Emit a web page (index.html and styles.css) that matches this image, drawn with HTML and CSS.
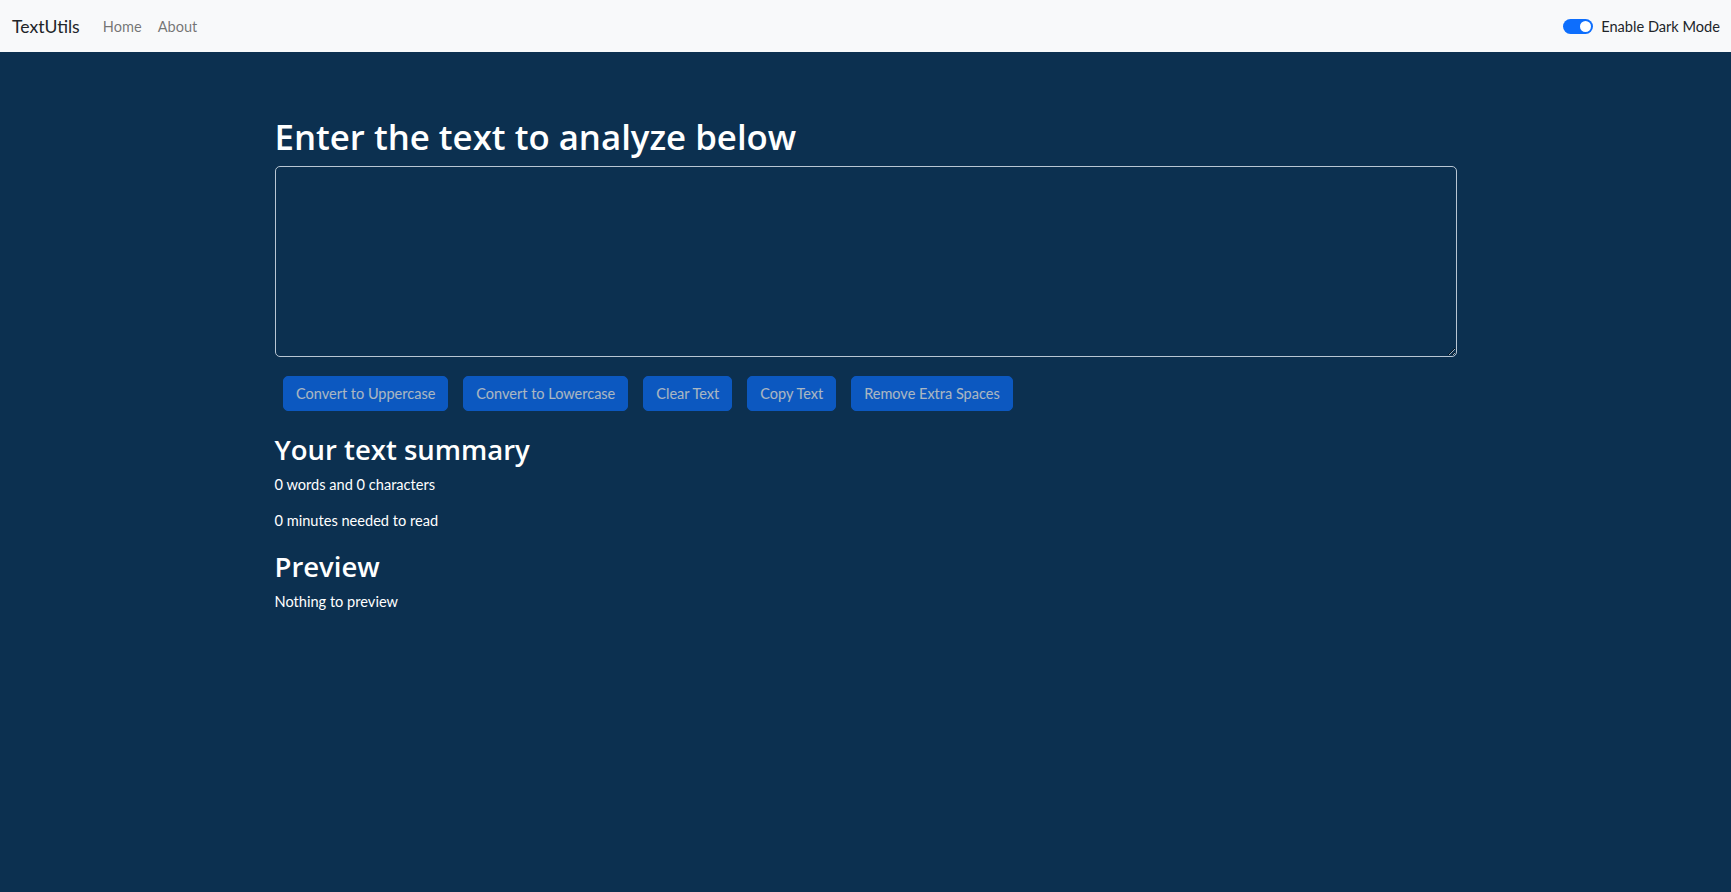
FILE: index.html
```html
<!DOCTYPE html>
<html lang="en">
<head>
<meta charset="utf-8">
<title>TextUtils</title>
<link rel="stylesheet" href="styles.css">
</head>
<body>
<nav class="navbar">
  <a class="brand" href="#">TextUtils</a>
  <ul class="nav-links">
    <li><a href="#">Home</a></li>
    <li><a href="#">About</a></li>
  </ul>
  <label class="switch">
    <span class="switch-track"><span class="switch-knob"></span></span>
    <span class="switch-label">Enable Dark Mode</span>
  </label>
</nav>
<main class="container">
  <h1 class="title">Enter the text to analyze below</h1>
  <textarea class="text-input" rows="8"></textarea>
  <div class="actions">
    <button class="btn" disabled>Convert to Uppercase</button>
    <button class="btn" disabled>Convert to Lowercase</button>
    <button class="btn" disabled>Clear Text</button>
    <button class="btn" disabled>Copy Text</button>
    <button class="btn" disabled>Remove Extra Spaces</button>
  </div>
  <section class="summary">
    <h2 class="subtitle">Your text summary</h2>
    <p class="line">0 words and 0 characters</p>
    <p class="line">0 minutes needed to read</p>
    <h2 class="subtitle">Preview</h2>
    <p class="line">Nothing to preview</p>
  </section>
</main>
</body>
</html>
```
FILE: styles.css
```css
* { box-sizing: border-box; }
html, body { height: 100%; }
body {
  margin: 0;
  background: #0c3050;
  color: #ffffff;
  font-family: Lato, "Noto Sans", sans-serif;
  font-size: 14.6px;
}
.navbar {
  height: 52px;
  background: #f8f9fa;
  display: flex;
  align-items: center;
  padding: 0 11px 0 12px;
}
.brand {
  color: #212529;
  text-decoration: none;
  font-size: 17.6px;
  margin-right: 23px;
}
.nav-links {
  list-style: none;
  display: flex;
  gap: 16px;
  margin: 0;
  padding: 0;
  flex: 1;
}
.nav-links a {
  color: rgba(0,0,0,0.55);
  text-decoration: none;
  font-size: 14.6px;
}
.switch {
  display: flex;
  align-items: center;
  gap: 8px;
  color: #212529;
  font-size: 14.6px;
}
.switch-track {
  width: 30px;
  height: 15px;
  border-radius: 8px;
  background: #0d6efd;
  position: relative;
  display: inline-block;
}
.switch-knob {
  position: absolute;
  right: 2px;
  top: 2px;
  width: 11px;
  height: 11px;
  border-radius: 50%;
  background: #ffffff;
}
.container {
  width: 1182px;
  margin: 0 auto;
  padding-top: 64px;
}
.title {
  font-family: "Open Sans", Lato, sans-serif;
  font-size: 34.8px;
  font-weight: 600;
  line-height: 1.2;
  margin: 0 0 8px;
}
.text-input {
  display: block;
  width: 100%;
  height: 191px;
  background: #0c3050;
  color: #ffffff;
  border: 1px solid #b9c6d3;
  border-radius: 5px;
  font: inherit;
  padding: 6px 11px;
}
.actions {
  display: flex;
  margin-top: 19px;
  padding-left: 1px;
}
.btn {
  height: 35px;
  padding: 0 12px;
  margin: 0 7.5px;
  background: #0d6efd;
  color: #ffffff;
  border: 1px solid #0d6efd;
  border-radius: 5px;
  font-family: inherit;
  font-size: 14.5px;
  opacity: 0.65;
}
.summary {
  padding-top: 22px;
}
.subtitle {
  font-family: "Open Sans", Lato, sans-serif;
  font-size: 27.5px;
  font-weight: 600;
  line-height: 1.2;
  margin: 0 0 8px;
}
.line {
  margin: 0 0 14px;
  line-height: 1.5;
}
.line + .subtitle {
  margin-top: 18px;
}
```
